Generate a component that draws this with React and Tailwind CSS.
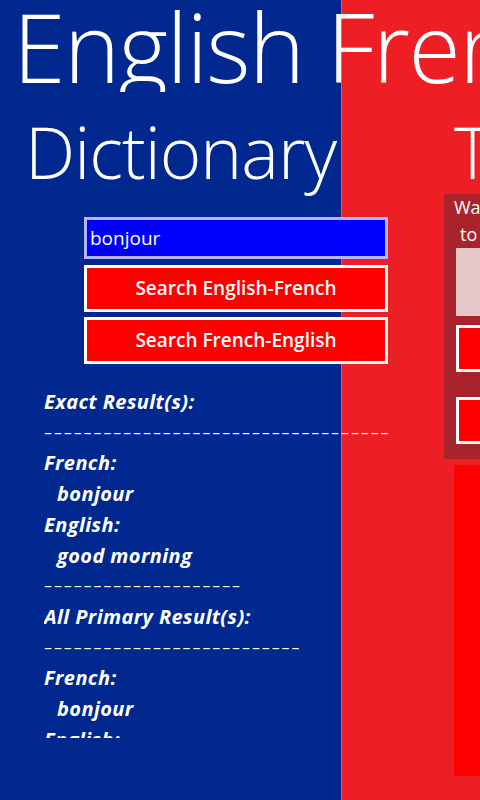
import React from 'react';

const sans = "font-['Open_Sans','Noto_Sans',sans-serif]";

const results = [
  { text: 'Exact Result(s):' },
  { text: '–'.repeat(35), dash: true },
  { text: 'French:' },
  { text: 'bonjour', indent: true },
  { text: 'English:' },
  { text: 'good morning', indent: true },
  { text: '–'.repeat(20), dash: true },
  { text: 'All Primary Result(s):' },
  { text: '–'.repeat(26), dash: true },
  { text: 'French:' },
  { text: 'bonjour', indent: true },
  { text: 'English:' },
  { text: 'good morning', indent: true },
];

function RedButton({ children, className = '' }) {
  return (
    <button
      type="button"
      className={`block h-[47px] border-[3px] border-white bg-[#ff0000] text-[19px] font-semibold text-white ${className}`}
    >
      {children}
    </button>
  );
}

export default function App() {
  return (
    <div
      className={`h-[800px] w-[480px] overflow-hidden bg-[linear-gradient(to_right,#00288f_341px,#5f7fd3_341px,#5f7fd3_342px,#ed1f25_342px)] text-white ${sans}`}
    >
      <div className="h-[92px] overflow-hidden whitespace-nowrap pl-[13px] text-[95px] font-light leading-[92px] tracking-[-1.5px]">
        English French
      </div>

      <div className="grid grid-cols-[342px_1fr]">
        {/* dictionary side */}
        <div>
          <div className="mt-[23px] whitespace-nowrap pl-[25px] text-[71px] font-light leading-[73px] tracking-[-1px]">
            Dictionary
          </div>

          <div className="ml-[84px] mt-[29px] flex w-[304px] flex-col">
            <div className="flex h-[42px] items-center border-[3px] border-white/70 bg-[#0000ff] px-[3px] text-[19px]">
              bonjour
            </div>
            <RedButton className="mt-[6px] w-full">Search English-French</RedButton>
            <RedButton className="mt-[5px] w-full">Search French-English</RedButton>
          </div>

          <div className="ml-[44px] mt-[23px] h-[351px] w-[380px] overflow-hidden">
            {results.map((row, i) =>
              row.dash ? (
                <div
                  key={i}
                  className="whitespace-nowrap font-['DejaVu_Sans',sans-serif] text-[16px] leading-[30.7px] tracking-[1.9px]"
                >
                  {row.text}
                </div>
              ) : (
                <div
                  key={i}
                  className={`whitespace-nowrap text-[20px] font-bold italic leading-[30.7px] tracking-[0.4px] ${
                    row.indent ? 'pl-[13px]' : ''
                  }`}
                >
                  {row.text}
                </div>
              )
            )}
          </div>
        </div>

        {/* translator side */}
        <div>
          <div className="mt-[23px] whitespace-nowrap pl-[112px] text-[71px] font-light leading-[73px] tracking-[-1px]">
            Translator
          </div>

          <div className="ml-[102px] mt-[6px] w-[300px] bg-[#a8232b] pb-[15px]">
            <div className="text-[18px] leading-[27px]">
              <div className="pl-[10px]">Want a phrase or sentence</div>
              <div className="pl-[16px]">to be translated?</div>
            </div>
            <div className="ml-[12px] h-[68px] bg-[#e4c7c7]" />
            <RedButton className="ml-[12px] mt-[9px] w-[270px]">Translate to French</RedButton>
            <RedButton className="ml-[12px] mt-[25px] w-[270px]">Translate to English</RedButton>
          </div>

          <div className="ml-[112px] mt-[6px] h-[311px] w-[280px] bg-[#ff0000]" />
        </div>
      </div>
    </div>
  );
}
